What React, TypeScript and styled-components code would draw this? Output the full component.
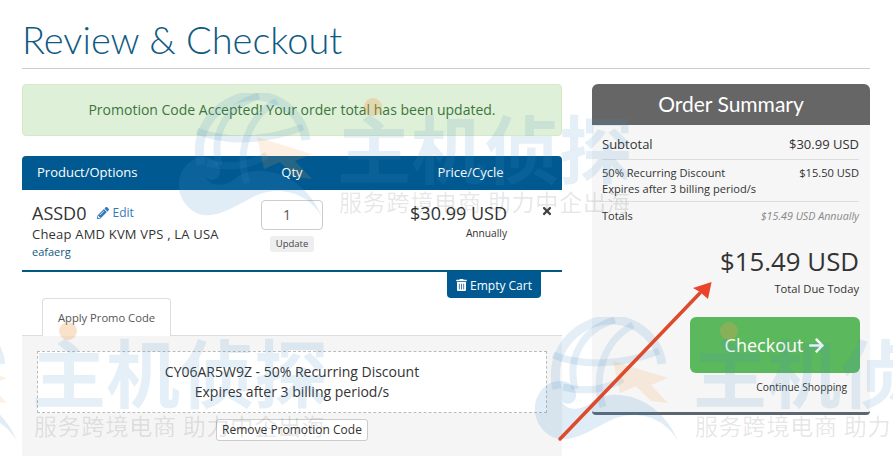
import React from "react";
import styled, { createGlobalStyle } from "styled-components";
import { FaArrowRight, FaPencilAlt, FaTimes, FaTrashAlt } from "react-icons/fa";

const Global = createGlobalStyle`
  html, body { margin: 0; padding: 0; background: #fff; }
  * { box-sizing: border-box; }
`;

const Page = styled.div`
  position: relative;
  width: 893px;
  height: 476px;
  overflow: hidden;
  padding: 0 23px 0 22px;
  font-family: "Open Sans", sans-serif;
  color: #333;
  background: #fff;
`;

const Title = styled.h1`
  margin: 0;
  height: 69px;
  padding-top: 16px;
  border-bottom: 1px solid #ccc;
  font-family: "Lato", sans-serif;
  font-size: 38px;
  line-height: 46px;
  font-weight: 300;
  color: #0f5a82;
`;

const Columns = styled.div`
  display: flex;
  gap: 30px;
  padding-top: 15px;
  align-items: flex-start;
`;

const Main = styled.div`
  width: 540px;
`;

const Alert = styled.div`
  height: 52px;
  margin-bottom: 20px;
  border: 1px solid #d6e9c6;
  border-radius: 4px;
  background: #dff0d8;
  color: #3c763d;
  font-size: 14px;
  line-height: 50px;
  text-align: center;
`;

const TableHead = styled.div`
  display: grid;
  grid-template-columns: 225px 90px 225px;
  height: 34px;
  border-radius: 4px 4px 0 0;
  background: #005a91;
  color: #fff;
  font-size: 13px;
  line-height: 33px;
`;

const HeadCell = styled.div<{ $inset?: number; $left?: boolean }>`
  padding-left: ${(p) => p.$inset ?? 0}px;
  text-align: ${(p) => (p.$left ? "left" : "center")};
`;

const ItemRow = styled.div`
  display: grid;
  grid-template-columns: 225px 90px 170px 55px;
  height: 82px;
  border-bottom: 2px solid #005a7f;
`;

const ProductCell = styled.div`
  padding: 12px 0 0 10px;
`;

const ProductName = styled.div`
  display: flex;
  align-items: center;
  font-size: 18px;
  line-height: 22px;
`;

const EditLink = styled.span`
  display: inline-flex;
  align-items: center;
  gap: 3px;
  margin-left: 11px;
  font-size: 12px;
  color: #337ab7;
  svg { width: 12px; height: 12px; }
`;

const ProductLine = styled.div`
  margin-top: 1px;
  font-size: 13px;
  line-height: 18px;
  letter-spacing: 0.2px;
`;

const GroupLine = styled.div`
  font-size: 11px;
  line-height: 17px;
  color: #0f5a82;
`;

const QtyCell = styled.div`
  display: flex;
  flex-direction: column;
  align-items: center;
  padding-top: 10px;
`;

const QtyInput = styled.div`
  width: 62px;
  height: 30px;
  padding-left: 21px;
  border: 1px solid #ccc;
  border-radius: 4px;
  background: #fff;
  font-size: 14px;
  line-height: 28px;
  color: #555;
`;

const UpdateButton = styled.div`
  margin-top: 6px;
  padding: 0 6px;
  height: 16px;
  border-radius: 3px;
  background: #eee;
  font-size: 9.5px;
  line-height: 16px;
  color: #444;
`;

const PriceCell = styled.div`
  padding-top: 12px;
  text-align: right;
`;

const Price = styled.div`
  font-size: 18px;
  line-height: 22px;
`;

const Cycle = styled.div`
  margin-top: 2px;
  font-size: 10.2px;
  line-height: 14px;
`;

const RemoveCell = styled.div`
  padding: 15px 0 0 34px;
  color: #444;
  svg { display: block; width: 12px; height: 12px; }
`;

const CartActions = styled.div`
  display: flex;
  justify-content: flex-end;
  padding-right: 21px;
`;

const EmptyCart = styled.div`
  display: flex;
  align-items: center;
  justify-content: center;
  gap: 3px;
  width: 94px;
  height: 26px;
  border-radius: 0 0 4px 4px;
  background: #005a91;
  color: #fff;
  font-size: 12px;
  svg { width: 11px; height: 12px; }
`;

const TabBar = styled.div`
  height: 38px;
  padding-left: 20px;
  border-bottom: 1px solid #ddd;
`;

const Tab = styled.div`
  width: 129px;
  height: 38px;
  border: 1px solid #ddd;
  border-bottom: 0;
  border-radius: 4px 4px 0 0;
  background: #fff;
  font-size: 11.2px;
  line-height: 38px;
  text-align: center;
  color: #555;
`;

const TabPanel = styled.div`
  height: 120px;
  padding: 15px;
  background: #f5f5f5;
`;

const PromoBox = styled.div`
  height: 62px;
  padding-top: 10px;
  border: 1px dashed #bbb;
  background: #fff;
  font-size: 14px;
  line-height: 20px;
  text-align: center;
`;

const RemovePromo = styled.div`
  width: 152px;
  height: 22px;
  margin: 6px auto 0;
  border: 1px solid #ccc;
  border-radius: 3px;
  background: #fff;
  font-size: 12px;
  line-height: 20px;
  text-align: center;
`;

const Summary = styled.aside`
  width: 278px;
  height: 331px;
  border-bottom: 3px solid #5c6670;
  border-radius: 6px 6px 4px 4px;
  background: #f6f6f6;
  overflow: hidden;
`;

const SummaryTitle = styled.div`
  height: 41px;
  background: #666;
  color: #fff;
  font-family: "Lato", sans-serif;
  font-size: 21px;
  line-height: 39px;
  text-align: center;
`;

const SummaryBody = styled.div`
  padding: 10px 11px 0 10px;
`;

const SummaryRow = styled.div<{ $tight?: boolean }>`
  display: flex;
  justify-content: space-between;
  padding-bottom: ${(p) => (p.$tight ? "4px" : "6px")};
  margin-bottom: ${(p) => (p.$tight ? "4px" : "5px")};
  border-bottom: 1px solid #ddd;
  font-size: ${(p) => (p.$tight ? "11.1px" : "13px")};
  line-height: ${(p) => (p.$tight ? "16px" : "18px")};
`;

const TotalsRow = styled.div`
  display: flex;
  justify-content: space-between;
  align-items: center;
  font-size: 11px;
  line-height: 20px;
`;

const TotalsValue = styled.em`
  font-size: 10.7px;
  color: #888;
`;

const GrandTotal = styled.div`
  margin-top: 17px;
  font-size: 25.8px;
  line-height: 36px;
  text-align: right;
`;

const DueToday = styled.div`
  margin-top: 2px;
  font-size: 11.2px;
  line-height: 16px;
  text-align: right;
`;

const CheckoutButton = styled.div`
  display: flex;
  align-items: center;
  justify-content: center;
  gap: 5px;
  width: 170px;
  height: 56px;
  margin: 20px -1px 0 auto;
  border-radius: 6px;
  background: #5cb85c;
  color: #fff;
  font-size: 18px;
  svg { width: 17px; height: 17px; }
`;

const ContinueLink = styled.div`
  margin-top: 7px;
  padding-right: 12px;
  font-size: 10.2px;
  line-height: 14px;
  text-align: right;
`;

const Watermark = styled.div<{ $x: number; $y: number }>`
  position: absolute;
  left: ${(p) => p.$x}px;
  top: ${(p) => p.$y}px;
  width: 480px;
  height: 130px;
  pointer-events: none;
  font-family: "Noto Sans CJK SC", sans-serif;
  svg { position: absolute; left: 0; top: 0; }
`;

const WatermarkDot = styled.div`
  position: absolute;
  left: 187px;
  top: 5px;
  width: 18px;
  height: 18px;
  border-radius: 50%;
  background: rgba(240, 160, 80, 0.3);
`;

const WatermarkName = styled.div`
  position: absolute;
  left: 160px;
  top: 3px;
  font-size: 74px;
  font-weight: 700;
  line-height: 100px;
  color: rgba(70, 140, 200, 0.14);
  white-space: nowrap;
`;

const WatermarkLine = styled.div`
  position: absolute;
  left: 162px;
  top: 92px;
  font-size: 23px;
  line-height: 32px;
  letter-spacing: 0.8px;
  color: rgba(0, 0, 0, 0.11);
  white-space: nowrap;
`;

const ArrowLayer = styled.svg`
  position: absolute;
  left: 550px;
  top: 270px;
  pointer-events: none;
`;

const marks = [
  { x: 533, y: -128 },
  { x: 177, y: 93 },
  { x: -128, y: 317 },
  { x: 533, y: 317 },
];

function Mark({ x, y }: { x: number; y: number }) {
  return (
    <Watermark $x={x} $y={y}>
      <svg width="150" height="130" viewBox="0 0 150 130" fill="none">
        <g stroke="rgb(70,140,200)" strokeOpacity="0.15" fill="none">
          <path d="M24 72C14 30 50 0 82 3c26 2 44 22 47 44" strokeWidth="9" />
          <path d="M42 72C34 40 50 12 82 3" strokeWidth="7" />
          <path d="M20 38c30 12 70 10 106-4" strokeWidth="7" />
          <path d="M70 90C60 60 70 24 100 8" strokeWidth="7" />
          <path d="M30 70c24 6 44 2 60-8" strokeWidth="7" />
        </g>
        <path
          d="M145 124C130 98 100 92 76 104C56 114 34 130 16 118C-2 106-3 80 14 68C26 60 42 64 43 77C44 87 32 90 28 83C34 97 52 92 60 84C80 70 126 78 145 124Z"
          fill="rgb(70,140,200)"
          fillOpacity="0.17"
        />
        <path d="M80 44L135 61L118 68L135 86L118 84L103 69L87 76Z" fill="rgb(240,160,80)" fillOpacity="0.16" />
      </svg>
      <WatermarkDot />
      <WatermarkName>主机侦探</WatermarkName>
      <WatermarkLine>服务跨境电商 助力中企出海</WatermarkLine>
    </Watermark>
  );
}

export default function App() {
  return (
    <Page>
      <Global />
      <Title>Review &amp; Checkout</Title>
      <Columns>
        <Main>
          <Alert>Promotion Code Accepted! Your order total has been updated.</Alert>
          <TableHead>
            <HeadCell $left $inset={15}>
              Product/Options
            </HeadCell>
            <HeadCell>Qty</HeadCell>
            <HeadCell $inset={42}>Price/Cycle</HeadCell>
          </TableHead>
          <ItemRow>
            <ProductCell>
              <ProductName>
                ASSD0
                <EditLink>
                  <FaPencilAlt /> Edit
                </EditLink>
              </ProductName>
              <ProductLine>Cheap AMD KVM VPS , LA USA</ProductLine>
              <GroupLine>eafaerg</GroupLine>
            </ProductCell>
            <QtyCell>
              <QtyInput>1</QtyInput>
              <UpdateButton>Update</UpdateButton>
            </QtyCell>
            <PriceCell>
              <Price>$30.99 USD</Price>
              <Cycle>Annually</Cycle>
            </PriceCell>
            <RemoveCell>
              <FaTimes />
            </RemoveCell>
          </ItemRow>
          <CartActions>
            <EmptyCart>
              <FaTrashAlt /> Empty Cart
            </EmptyCart>
          </CartActions>
          <TabBar>
            <Tab>Apply Promo Code</Tab>
          </TabBar>
          <TabPanel>
            <PromoBox>
              CY06AR5W9Z - 50% Recurring Discount
              <br />
              Expires after 3 billing period/s
            </PromoBox>
            <RemovePromo>Remove Promotion Code</RemovePromo>
          </TabPanel>
        </Main>
        <Summary>
          <SummaryTitle>Order Summary</SummaryTitle>
          <SummaryBody>
            <SummaryRow>
              <span>Subtotal</span>
              <span>$30.99 USD</span>
            </SummaryRow>
            <SummaryRow $tight>
              <span>
                50% Recurring Discount
                <br />
                Expires after 3 billing period/s
              </span>
              <span>$15.50 USD</span>
            </SummaryRow>
            <TotalsRow>
              <span>Totals</span>
              <TotalsValue>$15.49 USD Annually</TotalsValue>
            </TotalsRow>
            <GrandTotal>$15.49 USD</GrandTotal>
            <DueToday>Total Due Today</DueToday>
            <CheckoutButton>
              Checkout <FaArrowRight />
            </CheckoutButton>
            <ContinueLink>Continue Shopping</ContinueLink>
          </SummaryBody>
        </Summary>
      </Columns>
      {marks.map((m) => (
        <Mark key={`${m.x}-${m.y}`} x={m.x} y={m.y} />
      ))}
      <ArrowLayer width="170" height="180" viewBox="0 0 170 180">
        <path d="M10 169L150 23" stroke="#dd4a2c" strokeWidth="3.5" strokeLinecap="round" />
        <path d="M161.6 12L143 18L150 22L158 29Z" fill="#e8452a" />
      </ArrowLayer>
    </Page>
  );
}
